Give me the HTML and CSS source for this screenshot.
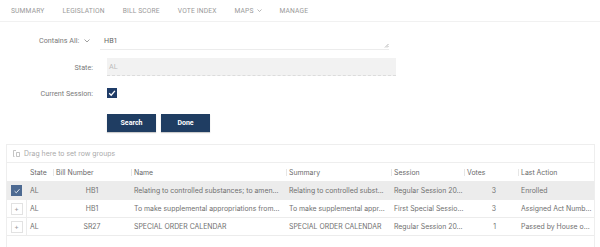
FILE: index.html
```html
<!DOCTYPE html>
<html>
<head>
<meta charset="utf-8">
<link rel="stylesheet" href="styles.css">
</head>
<body>
<nav class="nav">
  <a class="nav-item">Summary</a>
  <a class="nav-item">Legislation</a>
  <a class="nav-item">Bill Score</a>
  <a class="nav-item">Vote Index</a>
  <a class="nav-item">Maps <svg class="nchev" width="5" height="3" viewBox="0 0 5 3"><path d="M0.5 0.5 L2.5 2.5 L4.5 0.5" fill="none" stroke="#999" stroke-width="0.7"/></svg></a>
  <a class="nav-item">Manage</a>
</nav>

<section class="form">
  <div class="frow frow-contains">
    <label class="flabel">Contains All: <svg class="lchev" width="6" height="4" viewBox="0 0 6 4"><path d="M0.5 0.5 L3 3 L5.5 0.5" fill="none" stroke="#888" stroke-width="0.8"/></svg></label>
    <div class="ta">HB1<svg class="grip" width="5" height="5" viewBox="0 0 5 5"><path d="M4.5 1 L1 4.5 M4.5 3 L3 4.5" stroke="#999" stroke-width="0.7"/></svg></div>
  </div>
  <div class="frow frow-state">
    <label class="flabel">State:</label>
    <div class="dis">AL</div>
  </div>
  <div class="frow frow-cur">
    <label class="flabel">Current Session:</label>
    <span class="cb"><svg width="10" height="10" viewBox="0 0 10 10"><path d="M2.2 5.2 L4.2 7.2 L7.9 2.8" fill="none" stroke="#fff" stroke-width="1.3"/></svg></span>
  </div>
  <div class="frow frow-btn">
    <span class="flabel"></span>
    <div class="btns">
      <button class="btn">Search</button>
      <button class="btn">Done</button>
    </div>
  </div>
</section>

<section class="grid">
  <div class="drag"><svg class="dicon" width="7" height="7" viewBox="0 0 7 7"><path d="M0.5 0.5 H3 M0.5 0.5 V6.5 M0.5 6.5 H1.5 M3.5 2.5 H6.5 V6.5 H3.5 Z" fill="none" stroke="#aaa" stroke-width="0.7"/></svg>Drag here to set row groups</div>
  <div class="hrow">
    <div class="c c-chk"></div>
    <div class="c h">State</div>
    <div class="c h">Bill Number</div>
    <div class="c h">Name</div>
    <div class="c h">Summary</div>
    <div class="c h">Session</div>
    <div class="c h">Votes</div>
    <div class="c h">Last Action</div>
  </div>
  <div class="brow sel">
    <div class="c c-chk"><span class="rcb"><svg width="10" height="10" viewBox="0 0 10 10"><path d="M2.6 5.2 L4.3 6.8 L7.5 3.2" fill="none" stroke="#dfe6ef" stroke-width="1"/></svg></span></div>
    <div class="c">AL</div>
    <div class="c bn">HB1</div>
    <div class="c">Relating to controlled substances; to amen...</div>
    <div class="c">Relating to controlled subst...</div>
    <div class="c">Regular Session 20...</div>
    <div class="c num">3</div>
    <div class="c">Enrolled</div>
  </div>
  <div class="brow">
    <div class="c c-chk"><span class="plus">+</span></div>
    <div class="c">AL</div>
    <div class="c bn">HB1</div>
    <div class="c">To make supplemental appropriations from...</div>
    <div class="c">To make supplemental appr...</div>
    <div class="c">First Special Sessio...</div>
    <div class="c num">3</div>
    <div class="c">Assigned Act Numb...</div>
  </div>
  <div class="brow">
    <div class="c c-chk"><span class="plus">+</span></div>
    <div class="c">AL</div>
    <div class="c bn">SR27</div>
    <div class="c">SPECIAL ORDER CALENDAR</div>
    <div class="c">SPECIAL ORDER CALENDAR</div>
    <div class="c">Regular Session 20...</div>
    <div class="c num">1</div>
    <div class="c">Passed by House o...</div>
  </div>
</section>
</body>
</html>
```

FILE: styles.css
```css
html, body {
  margin: 0;
  padding: 0;
  background: #fff;
  font-family: Roboto, "Liberation Sans", sans-serif;
  color: #555;
}

.nav {
  display: flex;
  align-items: center;
  height: 21px;
  padding-left: 11px;
  gap: 18px;
  border-bottom: 1px solid #f1f1f1;
}
.nav-item {
  font-size: 6.7px;
  text-transform: uppercase;
  color: #9a9a9a;
  letter-spacing: 0.15px;
  display: inline-flex;
  align-items: center;
}
.nchev { margin-left: 3px; }

.form {
  display: flex;
  flex-direction: column;
}
.frow {
  display: flex;
  align-items: center;
}
.flabel {
  width: 93px;
  text-align: right;
  font-size: 7.2px;
  color: #7a7a7a;
  flex: none;
}
.frow-contains { margin-top: 8px; height: 20px; }
.frow-contains .flabel { width: 90px; }
.lchev { margin-left: 3px; vertical-align: middle; }
.ta {
  position: relative;
  margin-left: 10px;
  width: 289px;
  height: 19px;
  border-bottom: 1px solid #ececec;
  box-sizing: border-box;
  padding-left: 4px;
  font-size: 7.2px;
  color: #666;
  line-height: 20px;
}
.grip { position: absolute; right: 0; bottom: 1px; }

.frow-state { margin-top: 8px; height: 18px; }
.dis {
  margin-left: 14px;
  width: 289px;
  height: 18px;
  background: #f2f2f2;
  border-bottom: 1px dashed #dcdcdc;
  box-sizing: border-box;
  font-size: 7.2px;
  color: #bbb;
  line-height: 17px;
  padding-left: 2px;
}

.frow-cur { margin-top: 10px; height: 14px; }
.cb {
  margin-left: 14px;
  width: 10px;
  height: 10px;
  background: #1f3c68;
  display: inline-flex;
}

.frow-btn { margin-top: 14px; }
.btns {
  margin-left: 14px;
  display: flex;
  gap: 5px;
}
.btn {
  width: 49px;
  height: 18px;
  border: none;
  background: #1f3d62;
  color: #fff;
  font-family: Roboto, "Liberation Sans", sans-serif;
  font-weight: 700;
  font-size: 7px;
  padding: 0;
  box-shadow: 0 1px 1px rgba(0,0,0,0.2);
}

.grid {
  margin: 12px 5px 0 6px;
  border: 1px solid #eeeeee;
  border-bottom: none;
  height: 110px;
  font-family: Inter, Roboto, sans-serif;
  font-size: 6.9px;
  color: #707070;
}
.drag {
  height: 18px;
  box-sizing: border-box;
  display: flex;
  align-items: center;
  padding-left: 6px;
  gap: 4px;
  color: #aaa;
  border-bottom: 1px solid #eeeeee;
}
.hrow, .brow {
  display: grid;
  grid-template-columns: 20px 26px 78px 155px 105px 73px 54px 1fr;
  height: 18px;
  box-sizing: border-box;
  align-items: center;
  border-bottom: 1px solid #ececec;
}
.hrow { height: 19px; }
.c {
  padding-left: 3px;
  white-space: nowrap;
  overflow: hidden;
}
.h {
  color: #6a6a6a;
  position: relative;
}
.h + .h::before {
  content: "";
  position: absolute;
  left: 0;
  top: 2px;
  bottom: 2px;
  border-left: 1px solid #e6e6e6;
}
.hrow .h { line-height: 11px; }
.c-chk {
  padding-left: 0;
  display: flex;
  justify-content: center;
  height: 100%;
  align-items: center;
  border-right: 1px solid #ececec;
  box-sizing: border-box;
}
.hrow .c-chk { border-right: none; }
.brow .c { height: 100%; display: flex; align-items: center; box-sizing: border-box; }
.bn { justify-content: center; padding-left: 0; }
.num { justify-content: flex-end; padding-right: 22px; }
.sel { background: #ececec; }
.rcb {
  width: 11px;
  height: 11px;
  background: #4d6a92;
  display: inline-flex;
  align-items: center;
  justify-content: center;
}
.plus {
  width: 10px;
  height: 10px;
  border: 1px solid #e2e2e2;
  display: inline-flex;
  align-items: center;
  justify-content: center;
  color: #999;
  font-size: 7px;
  line-height: 1;
}
```
